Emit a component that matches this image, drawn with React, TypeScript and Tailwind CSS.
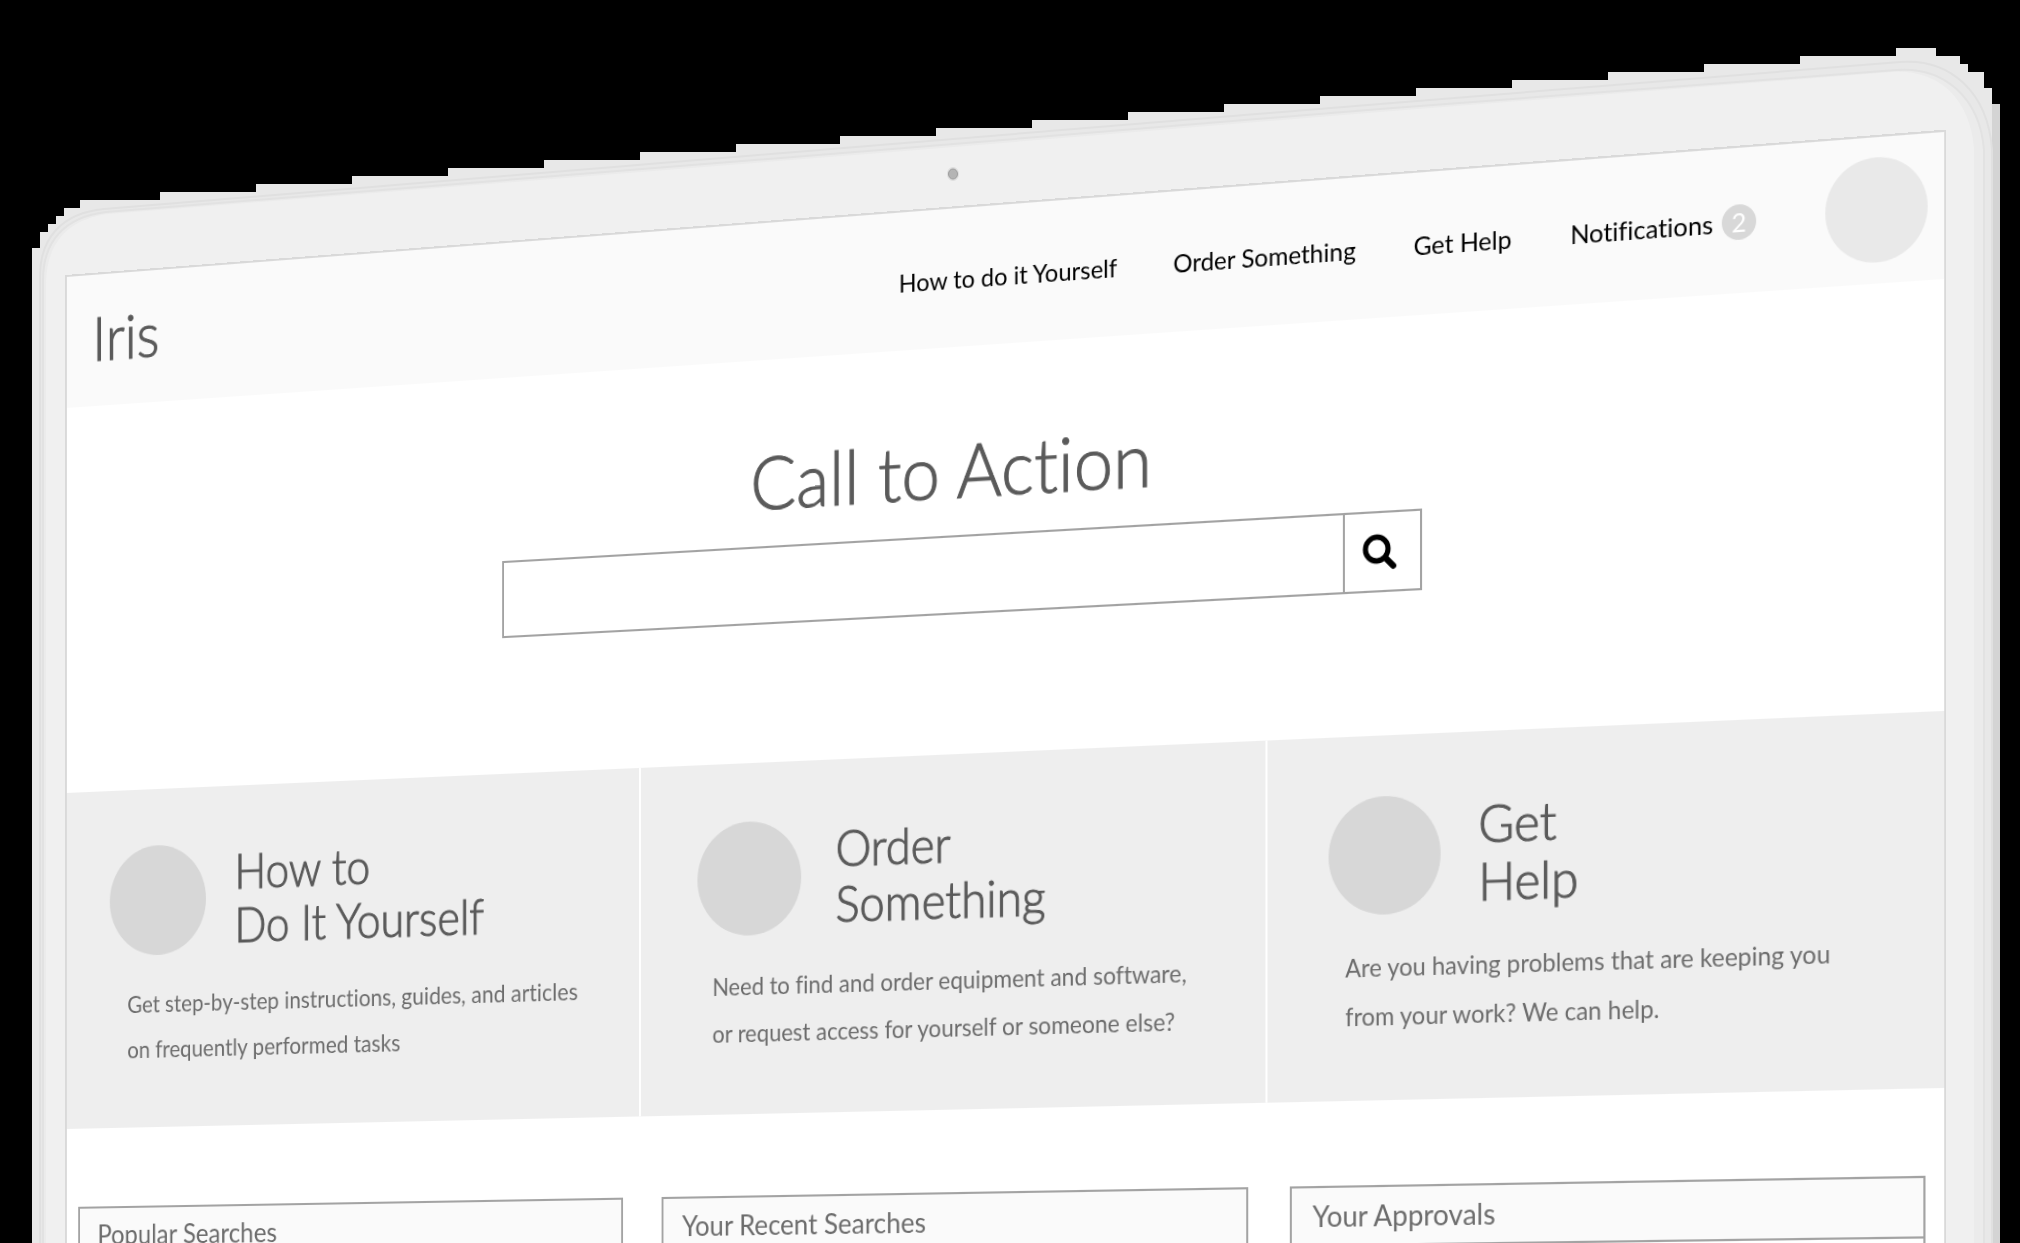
import { useEffect, useState } from "react";

const LINKS = ["How to do it Yourself", "Order Something", "Get Help"];

const CARDS = [
  {
    title: ["How to", "Do It Yourself"],
    text: ["Get step-by-step instructions, guides, and articles", "on frequently performed tasks"],
    pad: "pl-[50px]",
    gap: "gap-8",
    indent: "pl-5",
  },
  {
    title: ["Order", "Something"],
    text: ["Need to find and order equipment and software,", "or request access for yourself or someone else?"],
    pad: "pl-[60px] border-l-2 border-white",
    gap: "gap-9",
    indent: "pl-4",
  },
  {
    title: ["Get", "Help"],
    text: ["Are you having problems that are keeping you", "from your work? We can help."],
    pad: "pl-[60px] border-l-2 border-white",
    gap: "gap-9",
    indent: "pl-4",
  },
];

const PANELS = ["Popular Searches", "Your Recent Searches", "Your Approvals"];

/** Turns the flat screen about its vertical axis so that it sits inside the monitor's bezel. */
function useScreenTransform() {
  const [stage, setStage] = useState(() => document.documentElement.clientWidth);
  useEffect(() => {
    const update = () => setStage(document.documentElement.clientWidth);
    window.addEventListener("resize", update);
    return () => window.removeEventListener("resize", update);
  }, []);
  const width = stage * 0.95;
  const depth = -0.10898 / width;
  const left = (stage * 66) / 2020;
  const top = (stage * 276) / 2020;
  return `matrix3d(0.869,-0.083094,0,${depth}, 0,1,0,0, 0,0,1,0, ${left},${top},0,1)`;
}

function Monitor() {
  return (
    <svg
      aria-hidden="true"
      viewBox="0 0 2020 4000"
      className="absolute left-0 top-0 w-full"
      fill="none"
    >
      <defs>
        <clipPath id="silhouette">
          <path d="M32 4000V248H40V232H48V224H56V216H64V208H80V200H160V192H256V184H352V176H448V168H544V160H640V152H736V144H840V136H936V128H1032V120H1128V112H1224V104H1320V96H1416V88H1512V80H1608V72H1704V64H1800V56H1896V48H1936V56H1960V64H1968V72H1984V88H1992V104H2000V4000Z" />
        </clipPath>
      </defs>
      <g clipPath="url(#silhouette)">
        <rect width="2020" height="4000" fill="#e8e8e8" />
        <path d="M1992 104h8v3896h-8z" fill="#d4d4d4" />
        <path
          d="M40 4000V276C40 238 62 213 104 209L880 145L1380 104L1900 62C1950 58 1988 92 1992 150V4000Z"
          fill="#e8e8e8"
          stroke="#e0e0e0"
          strokeWidth="2"
        />
        <path
          d="M43 4000V280C43 242 64 217 106 212L880 150L1380 109L1896 70C1944 66 1980 98 1984 150V4000Z"
          fill="#ebebeb"
          stroke="#e2e2e2"
          strokeWidth="2"
        />
        <path
          d="M46 4000V284C46 246 66 219 108 214L880 153L1380 112L1892 72C1938 69 1970 98 1974 148V4000Z"
          fill="#f0f0f0"
        />
      </g>
      <ellipse cx="953" cy="174" rx="6" ry="7" fill="#dddddd" />
      <ellipse cx="953" cy="174" rx="4.5" ry="5" fill="#b4b4b4" stroke="#9f9f9f" />
    </svg>
  );
}

function SearchIcon() {
  return (
    <svg aria-hidden="true" viewBox="0 0 36 36" className="size-9" fill="none" stroke="#000" strokeLinecap="round">
      <circle cx="15" cy="15" r="11" strokeWidth="5" />
      <path d="M24 24L31 31" strokeWidth="6" />
    </svg>
  );
}

export default function App() {
  const transform = useScreenTransform();
  return (
    <div className="relative h-screen w-full overflow-hidden bg-black font-['Lato',sans-serif] [font-variant-ligatures:none]">
      <Monitor />
      <div
        className="relative w-[95%] origin-top-left bg-white text-[#5a5a5a] outline-2 outline-offset-[-1px] outline-[#d9d9d9]"
        style={{ transform }}
      >
        <header className="flex min-h-[132px] items-center justify-between bg-[#fafafa] pl-[30px] pr-4">
          <a href="#home" className="pb-1 text-[61px] font-light leading-[72px] [-webkit-text-stroke:1px]">
            Iris
          </a>
          <div className="flex items-center gap-16">
            <nav aria-label="Main" className="flex items-center gap-14 pt-1 text-2xl text-black">
              {LINKS.map((label) => (
                <a key={label} href="#link">
                  {label}
                </a>
              ))}
              <a href="#notifications" className="flex items-center gap-2">
                Notifications
                <span className="flex size-8 items-center justify-center rounded-full bg-[#d8d8d8] text-white">2</span>
              </a>
            </nav>
            <button type="button" aria-label="Account" className="size-[94px] rounded-full bg-[#e9e9e9]" />
          </div>
        </header>

        <main>
          <section className="flex min-h-[385px] flex-col items-center pr-1.5 pt-[70px]">
            <h1 className="text-[71px] font-light leading-[92px] [-webkit-text-stroke:1px]">Call to Action</h1>
            <form
              role="search"
              onSubmit={(event) => event.preventDefault()}
              className="mt-4 flex h-[75px] w-full max-w-[942px] border-2 border-[#a3a3a3]"
            >
              <input type="search" aria-label="Search" className="min-w-0 flex-1 px-6 text-2xl outline-none" />
              <button
                type="submit"
                aria-label="Submit search"
                className="flex w-[75px] items-center justify-center border-l-2 border-[#a3a3a3] pr-1"
              >
                <SearchIcon />
              </button>
            </form>
          </section>

          <section className="grid min-h-[336px] grid-cols-[633fr_643fr_644fr] bg-[#eeeeee]">
            {CARDS.map((card) => (
              <article key={card.title[0]} className={`${card.pad} pt-14`}>
                <div className={`${card.gap} flex items-center`}>
                  <span className="size-[109px] shrink-0 rounded-full bg-[#d7d7d7]" />
                  <h2 className="text-[47px] font-light leading-[53px] [-webkit-text-stroke:1px]">
                    {card.title[0]}
                    <br />
                    {card.title[1]}
                  </h2>
                </div>
                <p className={`${card.indent} mt-[26px] text-[23px] leading-[45px] text-[#6c6c6c]`}>
                  {card.text[0]}
                  <br />
                  {card.text[1]}
                </p>
              </article>
            ))}
          </section>

          <section className="grid grid-cols-3 gap-[41px] pb-20 pl-3.5 pr-[18px] pt-[78px]">
            {PANELS.map((title) => (
              <section key={title} className="min-h-80 border-2 border-[#a3a3a3]">
                <h3 className="border-b-2 border-[#a3a3a3] bg-[#fafafa] px-5 text-[27px] leading-[52px] text-[#6c6c6c]">
                  {title}
                </h3>
              </section>
            ))}
          </section>
        </main>
      </div>
    </div>
  );
}
